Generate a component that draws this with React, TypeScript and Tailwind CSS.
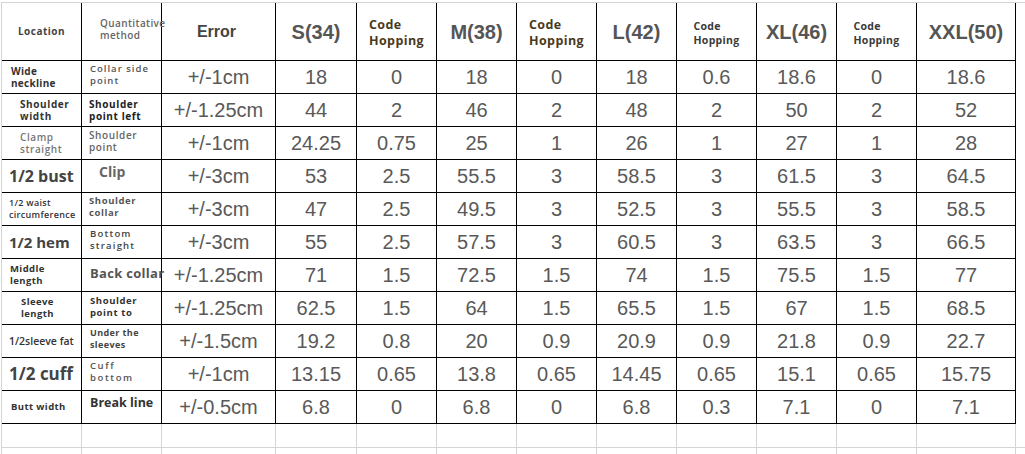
import React from 'react';

type Row = {
  loc: React.ReactNode;
  method: React.ReactNode;
  err: string;
  vals: string[];
};

const sizes = ['S(34)', 'M(38)', 'L(42)', 'XL(46)', 'XXL(50)'];

const rows: Row[] = [
  {
    loc: <div className="pl-[9px] text-[10px] font-bold leading-[12px] text-[#333] tracking-[0.3px]">Wide<br />neckline</div>,
    method: <div className="pl-[8px] -mt-[5px] text-[9.5px] font-semibold leading-[12px] text-[#555] tracking-[1px]">Collar side<br />point</div>,
    err: '+/-1cm',
    vals: ['18', '0', '18', '0', '18', '0.6', '18.6', '0', '18.6'],
  },
  {
    loc: <div className="pl-[18px] text-[10px] font-bold leading-[12px] text-[#333] tracking-[0.6px]">Shoulder<br />width</div>,
    method: <div className="pl-[7px] text-[10px] font-bold leading-[12px] text-[#222] tracking-[0.6px]">Shoulder<br />point left</div>,
    err: '+/-1.25cm',
    vals: ['44', '2', '46', '2', '48', '2', '50', '2', '52'],
  },
  {
    loc: <div className="pl-[18px] text-[10px] font-semibold leading-[12px] text-[#777] tracking-[0.6px]">Clamp<br />straight</div>,
    method: <div className="pl-[7px] -mt-[5px] text-[10px] font-semibold leading-[12px] text-[#666] tracking-[0.6px]">Shoulder<br />point</div>,
    err: '+/-1cm',
    vals: ['24.25', '0.75', '25', '1', '26', '1', '27', '1', '28'],
  },
  {
    loc: <div className="pl-[7px] text-[16px] font-bold leading-[18px] text-[#444]">1/2 bust</div>,
    method: <div className="pl-[17px] -mt-[8px] text-[14px] font-bold leading-[16px] text-[#666]">Clip</div>,
    err: '+/-3cm',
    vals: ['53', '2.5', '55.5', '3', '58.5', '3', '61.5', '3', '64.5'],
  },
  {
    loc: <div className="pl-[7px] text-[9px] font-semibold leading-[12px] text-[#333] tracking-[0.3px]">1/2 waist<br />circumference</div>,
    method: <div className="pl-[7px] -mt-[4px] text-[9.5px] font-bold leading-[12px] text-[#555] tracking-[0.6px]">Shoulder<br />collar</div>,
    err: '+/-3cm',
    vals: ['47', '2.5', '49.5', '3', '52.5', '3', '55.5', '3', '58.5'],
  },
  {
    loc: <div className="pl-[7px] text-[15px] font-bold leading-[18px] text-[#444]">1/2 hem</div>,
    method: <div className="pl-[8px] -mt-[4px] text-[9.5px] font-semibold leading-[12px] text-[#444] tracking-[1.2px]">Bottom<br />straight</div>,
    err: '+/-3cm',
    vals: ['55', '2.5', '57.5', '3', '60.5', '3', '63.5', '3', '66.5'],
  },
  {
    loc: <div className="pl-[8px] text-[9.5px] font-bold leading-[12px] text-[#333] tracking-[0.4px]">Middle<br />length</div>,
    method: <div className="pl-[8px] -mt-[5px] text-[13px] font-bold leading-[16px] text-[#555] tracking-[0.3px] whitespace-nowrap">Back collar</div>,
    err: '+/-1.25cm',
    vals: ['71', '1.5', '72.5', '1.5', '74', '1.5', '75.5', '1.5', '77'],
  },
  {
    loc: <div className="pl-[19px] text-[9.5px] font-bold leading-[12px] text-[#333] tracking-[0.4px]">Sleeve<br />length</div>,
    method: <div className="pl-[8px] -mt-[2px] text-[9.5px] font-bold leading-[12px] text-[#333] tracking-[0.6px]">Shoulder<br />point to</div>,
    err: '+/-1.25cm',
    vals: ['62.5', '1.5', '64', '1.5', '65.5', '1.5', '67', '1.5', '68.5'],
  },
  {
    loc: <div className="pl-[7px] text-[10.5px] font-semibold leading-[12px] text-[#333] whitespace-nowrap">1/2sleeve fat</div>,
    method: <div className="pl-[8px] -mt-[4px] text-[9px] font-bold leading-[12px] text-[#444] tracking-[0.4px]">Under the<br />sleeves</div>,
    err: '+/-1.5cm',
    vals: ['19.2', '0.8', '20', '0.9', '20.9', '0.9', '21.8', '0.9', '22.7'],
  },
  {
    loc: <div className="pl-[7px] text-[17px] font-bold leading-[18px] text-[#444]">1/2 cuff</div>,
    method: <div className="pl-[8px] -mt-[4px] text-[9.5px] font-semibold leading-[12px] text-[#555] tracking-[1.6px]">Cuff<br />bottom</div>,
    err: '+/-1cm',
    vals: ['13.15', '0.65', '13.8', '0.65', '14.45', '0.65', '15.1', '0.65', '15.75'],
  },
  {
    loc: <div className="pl-[9px] text-[9.5px] font-bold leading-[12px] text-[#333] tracking-[0.4px]">Butt width</div>,
    method: <div className="pl-[8px] -mt-[8px] text-[12.5px] font-bold leading-[16px] text-[#333] whitespace-nowrap">Break line</div>,
    err: '+/-0.5cm',
    vals: ['6.8', '0', '6.8', '0', '6.8', '0.3', '7.1', '0', '7.1'],
  },
];

const cell = 'border-r border-b border-black flex items-center';
const num = 'border-r border-b border-black flex items-center justify-center text-[20px] text-[#595959]';
const blank = 'border-r border-b border-[#d4d4d4]';

const CodeHopping = ({ small }: { small?: boolean }) => (
  <div className={`${cell} justify-center`}>
    <div
      className={
        small
          ? 'text-[10.5px] font-bold leading-[14px] text-[#3a3a3a] tracking-[0.3px] pt-[2px]'
          : 'text-[12.5px] font-bold leading-[16px] text-[#4a3a1c] tracking-[0.4px] pt-[2px]'
      }
    >
      Code
      <br />
      Hopping
    </div>
  </div>
);

export default function App() {
  return (
    <div className="w-[1025px] h-[454px] bg-white overflow-hidden font-['Open_Sans',sans-serif]">
      <div className="ml-px mt-[2px] border-l border-t border-[#d4d4d4] grid grid-cols-[80px_80px_114px_81px_80px_80px_80px_80px_80px_80px_80px_99px_1fr] grid-rows-[58px_repeat(11,33px)_24px_24px]">
        {/* header */}
        <div className={`${cell} justify-center`}>
          <span className="text-[10px] font-bold text-[#444] tracking-[0.5px]">Location</span>
        </div>
        <div className={`${cell} overflow-visible`}>
          <div className="pl-[18px] -mt-[6px] text-[10px] font-semibold leading-[12px] text-[#666] tracking-[0.4px] whitespace-nowrap relative z-10">
            Quantitative
            <br />
            method
          </div>
        </div>
        <div className={`${cell} justify-center`}>
          <span className="font-['Liberation_Sans',sans-serif] text-[16px] font-bold text-[#444] -ml-[4px]">Error</span>
        </div>
        {sizes.map((s, i) => (
          <React.Fragment key={s}>
            <div className={`${cell} justify-center`}>
              <span className="font-['Liberation_Sans',sans-serif] text-[20px] font-bold text-[#555]">{s}</span>
            </div>
            {i < 4 && <CodeHopping small={i >= 2} />}
          </React.Fragment>
        ))}
        <div />

        {rows.map((r, ri) => (
          <React.Fragment key={ri}>
            <div className={cell}>{r.loc}</div>
            <div className={`${cell} overflow-visible`}>{r.method}</div>
            <div className={`${num} font-['Liberation_Sans',sans-serif]`}>{r.err}</div>
            {r.vals.map((v, vi) => (
              <div key={vi} className={`${num} font-['Liberation_Sans',sans-serif]`}>
                {v}
              </div>
            ))}
            <div />
          </React.Fragment>
        ))}

        {[0, 1].map((k) => (
          <React.Fragment key={k}>
            {Array.from({ length: 12 }).map((_, ci) => (
              <div key={ci} className={blank} />
            ))}
            <div className="border-b border-[#d4d4d4]" />
          </React.Fragment>
        ))}
      </div>
    </div>
  );
}
